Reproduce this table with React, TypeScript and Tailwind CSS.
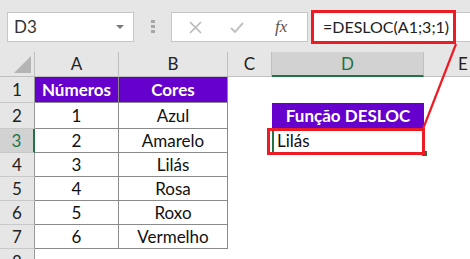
import { Fragment } from "react";

const table = [
  { a: "Números", b: "Cores", d: "", head: true },
  { a: "1", b: "Azul", d: "Função DESLOC" },
  { a: "2", b: "Amarelo", d: "Lilás" },
  { a: "3", b: "Lilás", d: "" },
  { a: "4", b: "Rosa", d: "" },
  { a: "5", b: "Roxo", d: "" },
  { a: "6", b: "Vermelho", d: "" },
];

export default function App() {
  return (
    <div className="relative h-[259px] w-[470px] overflow-hidden bg-white text-[#222] font-['Lato',sans-serif]">
      {/* formula bar */}
      <div className="flex h-[52px] items-start bg-[#e6e6e6] pl-[7px] pt-[12px]">
        <div className="flex h-[30px] w-[127px] items-center justify-between border border-[#c6c6c6] bg-white pl-[6px] pr-[9px]">
          <span className="text-[17px] text-[#333]">D3</span>
          <span className="h-0 w-0 border-x-[4px] border-t-[4px] border-x-transparent border-t-[#777]" />
        </div>
        <div className="ml-[17px] mt-[8px] flex flex-col gap-[2px]">
          <span className="h-[3px] w-[4px] bg-[#a6a6a6]" />
          <span className="h-[3px] w-[4px] bg-[#a6a6a6]" />
          <span className="h-[3px] w-[4px] bg-[#a6a6a6]" />
        </div>
        <div className="ml-[16px] flex h-[30px] w-[137px] items-center border border-[#c6c6c6] bg-white pl-[17px]">
          <svg width="13" height="13" viewBox="0 0 13 13" className="shrink-0">
            <path d="M1 1L12 12M12 1L1 12" stroke="#b8b8b8" strokeWidth="1.6" />
          </svg>
          <svg width="14" height="11" viewBox="0 0 14 11" className="ml-[28px] shrink-0">
            <path d="M1 6L5 10L13 1" stroke="#c2c2c2" strokeWidth="2" fill="none" />
          </svg>
          <span className="ml-[31px] text-[17px] italic text-[#555] font-['Liberation_Serif',serif]">fx</span>
        </div>
        <div className="relative ml-[3px] h-[30px] flex-1 border-y border-l border-[#c6c6c6] bg-white">
          <div className="absolute left-[-1px] top-[-3px] flex h-[34px] w-[145px] items-center border-[3px] border-[#ed1c24] pl-[9px] text-[16px] text-[#222]">
            =DESLOC(A1;3;1)
          </div>
        </div>
      </div>

      {/* sheet */}
      <div className="grid grid-cols-[35px_84px_109px_44px_152px_46px] grid-rows-[25px_26px_26px_24px_24px_24px_24px_24px_10px] text-[17px]">
        {/* column headers */}
        <div className="flex items-end justify-end border-b border-r border-[#bfbfbf] bg-[#e6e6e6] pb-[3px] pr-[3px]">
          <span className="h-0 w-0 border-b-[17px] border-l-[17px] border-b-[#b4b4b4] border-l-transparent" />
        </div>
        {["A", "B", "C"].map((c) => (
          <div key={c} className="flex items-center justify-center border-b border-r border-[#bfbfbf] bg-[#e6e6e6] text-[#222]">
            {c}
          </div>
        ))}
        <div className="flex items-center justify-center border-b-2 border-r border-b-[#217346] border-r-[#bfbfbf] bg-[#d2d2d2] text-[#217346]">
          D
        </div>
        <div className="flex items-center justify-start border-b border-[#bfbfbf] bg-[#e6e6e6] pl-[34px] text-[#222]">
          E
        </div>

        {table.map((r, i) => (
          <Fragment key={i}>
            <div
              className={
                i === 2
                  ? "flex items-center justify-center border-b border-r-2 border-b-[#c8c8c8] border-r-[#217346] bg-[#d2d2d2] text-[#217346]"
                  : "flex items-center justify-center border-b border-r border-b-[#c8c8c8] border-r-[#9a9a9a] bg-[#e6e6e6] text-[#222]"
              }
            >
              {i + 1}
            </div>
            <div
              className={
                r.head
                  ? "flex items-center justify-center border-b border-r border-[#8a8a8a] bg-[#6600cc] font-bold text-white"
                  : "flex items-center justify-center border-b border-r border-[#8a8a8a] text-[#111]"
              }
            >
              {r.a}
            </div>
            <div
              className={
                r.head
                  ? "flex items-center justify-center border-b border-r border-[#8a8a8a] bg-[#6600cc] font-bold text-white"
                  : "flex items-center justify-center border-b border-r border-[#8a8a8a] text-[#111]"
              }
            >
              {r.b}
            </div>
            <div />
            {i === 1 ? (
              <div className="flex items-center justify-center bg-[#6600cc] font-bold text-white">{r.d}</div>
            ) : i === 2 ? (
              <div className="relative flex items-center border-l-2 border-[#217346] pl-[3px] text-[#111]">
                {r.d}
                <span className="absolute bottom-[-3px] right-[-3px] h-[5px] w-[5px] bg-[#217346]" />
                <span className="absolute bottom-[-2px] left-[-7px] right-[-1px] top-[-1px] border-[3px] border-[#ed1c24]" />
              </div>
            ) : (
              <div />
            )}
            <div />
          </Fragment>
        ))}

        <div className="flex items-start justify-center border-r border-r-[#9a9a9a] bg-[#e6e6e6] text-[#222]">8</div>
        <div />
        <div />
        <div />
        <div />
        <div />
      </div>

      {/* arrow line */}
      <svg className="pointer-events-none absolute left-0 top-0" width="470" height="259">
        <line x1="456" y1="44" x2="423" y2="129" stroke="#ed1c24" strokeWidth="2.2" />
      </svg>
    </div>
  );
}
